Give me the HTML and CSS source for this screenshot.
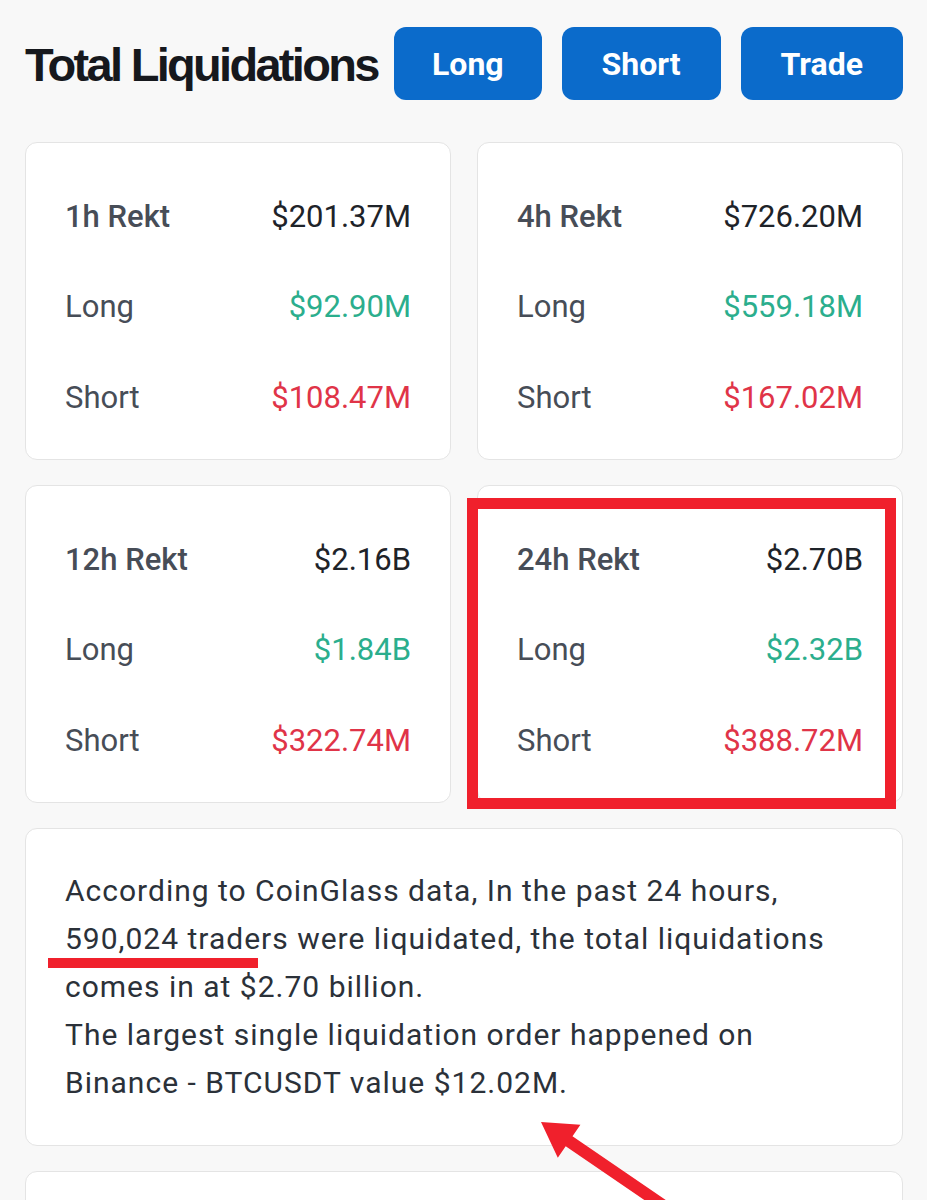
FILE: index.html
```html
<!DOCTYPE html>
<html lang="en">
<head>
<meta charset="utf-8">
<title>Total Liquidations</title>
<link rel="stylesheet" href="styles.css">
</head>
<body>
<div class="page">
  <header class="header">
    <h1 class="title">Total Liquidations</h1>
    <div class="actions">
      <button class="btn btn-long">Long</button>
      <button class="btn btn-short">Short</button>
      <button class="btn btn-trade">Trade</button>
    </div>
  </header>

  <section class="grid">
    <div class="card">
      <div class="row head"><span class="label">1h Rekt</span><span class="val">$201.37M</span></div>
      <div class="row"><span class="label">Long</span><span class="val up">$92.90M</span></div>
      <div class="row"><span class="label">Short</span><span class="val down">$108.47M</span></div>
    </div>
    <div class="card">
      <div class="row head"><span class="label">4h Rekt</span><span class="val">$726.20M</span></div>
      <div class="row"><span class="label">Long</span><span class="val up">$559.18M</span></div>
      <div class="row"><span class="label">Short</span><span class="val down">$167.02M</span></div>
    </div>
    <div class="card">
      <div class="row head"><span class="label">12h Rekt</span><span class="val">$2.16B</span></div>
      <div class="row"><span class="label">Long</span><span class="val up">$1.84B</span></div>
      <div class="row"><span class="label">Short</span><span class="val down">$322.74M</span></div>
    </div>
    <div class="card highlighted">
      <div class="row head"><span class="label">24h Rekt</span><span class="val">$2.70B</span></div>
      <div class="row"><span class="label">Long</span><span class="val up">$2.32B</span></div>
      <div class="row"><span class="label">Short</span><span class="val down">$388.72M</span></div>
      <div class="mark-box"></div>
    </div>
  </section>

  <section class="card summary">
    <p class="text">According to CoinGlass data, In the past 24 hours,<br>590,024 traders were liquidated, the total liquidations<br>comes in at $2.70 billion.<br>The largest single liquidation order happened on<br>Binance - BTCUSDT value $12.02M.</p>
    <div class="mark-line"></div>
  </section>

  <section class="card next"></section>

  <svg class="mark-arrow" width="150" height="110" viewBox="0 0 150 110" aria-hidden="true">
    <polygon points="11,12 50.4,14.7 42.5,26.2 141.6,94 134.8,104 35.7,36.2 27.8,47.7" fill="#f0202c"/>
  </svg>
</div>
</body>
</html>
```

FILE: styles.css
```css
html, body {
  margin: 0;
  padding: 0;
  background: #f8f8f8;
}

.page {
  position: relative;
  padding: 27px 24px 0 25px;
  font-family: Roboto, "Noto Sans", sans-serif;
  overflow: hidden;
  height: 1200px;
  box-sizing: border-box;
}

.header {
  display: flex;
  align-items: center;
  justify-content: space-between;
  height: 73px;
}

.title {
  margin: 0;
  font-family: "Liberation Sans", Arial, sans-serif;
  font-weight: 700;
  font-size: 47px;
  letter-spacing: -2.7px;
  color: #16181d;
  line-height: 1;
  padding-top: 2px;
}

.actions {
  display: flex;
  gap: 20px;
}

.btn {
  height: 73px;
  padding: 0 38px;
  border: none;
  border-radius: 12px;
  background: #0b6bcb;
  color: #ffffff;
  font-family: Roboto, sans-serif;
  font-weight: 700;
  font-size: 32px;
}

.btn-short {
  padding: 0 40px;
}

.btn-trade {
  padding: 0 40px;
}

.grid {
  margin-top: 42px;
  display: grid;
  grid-template-columns: 1fr 1fr;
  column-gap: 26px;
  row-gap: 25px;
}

.card {
  position: relative;
  background: #ffffff;
  border: 1px solid #e4e4e4;
  border-radius: 12px;
  padding: 53px 39px 42px;
  display: flex;
  flex-direction: column;
  gap: 50.5px;
}

.row {
  display: flex;
  justify-content: space-between;
  align-items: center;
  height: 40px;
  font-size: 31px;
}

.label {
  color: #474d57;
}

.head .label {
  font-weight: 500;
}

.val {
  color: #1e2329;
}

.val.up {
  color: #2bae8d;
}

.val.down {
  color: #e03448;
}

.mark-box {
  position: absolute;
  left: -11px;
  top: 12px;
  width: 429px;
  height: 311px;
  box-sizing: border-box;
  border: 11px solid #f0202c;
}

.summary {
  margin-top: 25px;
  padding: 38px 39px 38px;
  display: block;
}

.text {
  margin: 0;
  font-size: 30px;
  letter-spacing: 1px;
  line-height: 48px;
  color: #2b3139;
}

.mark-line {
  position: absolute;
  left: 22px;
  top: 129px;
  width: 210px;
  height: 10px;
  background: #f0202c;
}

.next {
  margin-top: 25px;
  height: 120px;
  padding: 0;
}

.mark-arrow {
  position: absolute;
  left: 530px;
  top: 1110px;
}
```
